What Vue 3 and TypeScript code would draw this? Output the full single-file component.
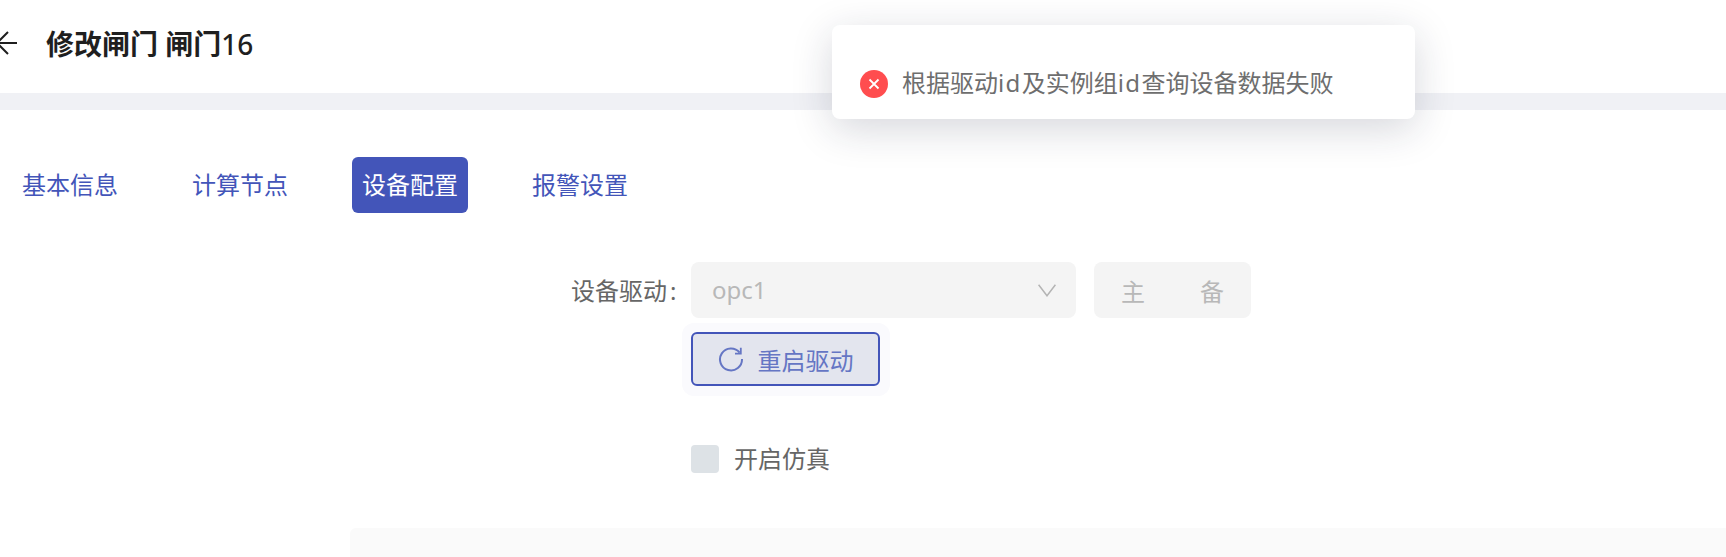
<script setup lang="ts">
const tabs: { label: string; active?: boolean }[] = [
  { label: '基本信息' },
  { label: '计算节点' },
  { label: '设备配置', active: true },
  { label: '报警设置' },
]
</script>

<template>
  <div class="page">
    <header class="header">
      <svg class="back" width="28" height="28" viewBox="0 0 28 28" fill="none" stroke="#1f1f1f" stroke-width="2">
        <path d="M28 14H8M19 3 8 14l11 11" />
      </svg>
      <h1 class="title">修改闸门 闸门<span class="num">16</span></h1>
    </header>
    <div class="band"></div>
    <main class="content">
      <nav class="tabs">
        <div v-for="t in tabs" :key="t.label" class="tab" :class="{ active: t.active }">{{ t.label }}</div>
      </nav>
      <section class="form">
        <div class="row">
          <label class="label">设备驱动<span class="colon">:</span></label>
          <div class="select">
            <span class="value">opc1</span>
            <svg width="18" height="13" viewBox="0 0 18 13" fill="none" stroke="#b4b4b4" stroke-width="1.5">
              <path d="M.6.8 9 11.8 17.4.8" />
            </svg>
          </div>
          <div class="radio"><span>主</span><span>备</span></div>
        </div>
        <div class="action">
          <button class="restart" type="button">
            <svg width="26" height="26" viewBox="0 0 26 26" fill="none" stroke="#6576c4" stroke-width="2">
              <path d="M21.6 6.6A11 11 0 1 0 24 13" />
              <path d="M22.8 1.8v5.8h-5.8" stroke-width="1.8" />
            </svg>
            <span class="restart-text">重启驱动</span>
          </button>
        </div>
        <div class="check">
          <span class="box"></span>
          <span class="check-text">开启仿真</span>
        </div>
      </section>
      <div class="panel"></div>
    </main>
    <div class="toast">
      <span class="toast-icon">
        <svg width="12" height="12" viewBox="0 0 12 12" stroke="#fff" stroke-width="1.8" fill="none">
          <path d="M1.5 1.5l9 9M10.5 1.5l-9 9" />
        </svg>
      </span>
      <span class="toast-text">根据驱动<span class="latin">id</span>及实例组<span class="latin">id</span>查询设备数据失败</span>
    </div>
  </div>
</template>

<style>
html, body { margin: 0; overflow: hidden; background: #fff; }
</style>

<style scoped>
.page {
  position: relative;
  width: 1726px;
  height: 557px;
  overflow: hidden;
  background: #fff;
  font-family: "Noto Sans", "Noto Sans CJK SC", sans-serif;
  font-size: 24px;
  color: #666;
}
.header {
  height: 93px;
  display: flex;
  align-items: center;
  gap: 29px;
  margin-left: -11px;
}
.back { flex: none; margin-top: -8px; }
.title {
  margin: -6px 0 0;
  font-size: 28px;
  font-weight: 700;
  color: #1f1f1f;
  line-height: 36px;
}
.num { font-weight: 500; }
.band { height: 17px; background: #f0f1f5; }
.content { padding: 47px 0 0; }
.tabs { display: flex; gap: 54px; padding-left: 12px; }
.tab {
  width: 116px;
  height: 56px;
  line-height: 56px;
  text-align: center;
  color: #4355b9;
  border-radius: 6px;
}
.tab.active { background: #4355b9; color: #fff; }
.form { padding: 49px 0 0 571px; }
.row { display: flex; align-items: center; height: 56px; }
.label { width: 120px; color: #666; white-space: nowrap; margin-top: -2px; }
.colon { margin-left: 3px; }
.select {
  width: 385px;
  height: 56px;
  box-sizing: border-box;
  padding: 0 20px 0 21px;
  display: flex;
  align-items: center;
  justify-content: space-between;
  background: #f4f4f4;
  border-radius: 8px;
  color: #b8b8b8;
}
.value { margin-top: -2px; }
.radio {
  margin-left: 18px;
  width: 157px;
  height: 56px;
  box-sizing: border-box;
  padding: 0 27px;
  display: flex;
  align-items: center;
  justify-content: space-between;
  background: #f4f4f4;
  border-radius: 8px;
  color: #b8b8b8;
}
.action {
  display: inline-flex;
  margin: 5px 0 0 111px;
  padding: 9px 10px 10px 9px;
  background: #fafafd;
  border-radius: 12px;
}
.restart {
  width: 189px;
  height: 54px;
  box-sizing: border-box;
  display: flex;
  align-items: center;
  justify-content: center;
  gap: 14px;
  padding: 0;
  background: #e3e5ee;
  border: 2px solid #4355b9;
  border-radius: 6px;
  font: inherit;
  color: #6576c4;
}
.check {
  display: flex;
  align-items: center;
  gap: 15px;
  margin: 43px 0 0 120px;
  height: 40px;
}
.check-text { margin-top: -3px; }
.box {
  width: 28px;
  height: 28px;
  background: #dde2e6;
  border-radius: 4px;
}
.panel {
  margin: 49px 0 0 350px;
  height: 60px;
  background: #fafafa;
  border-radius: 6px 0 0 0;
}
.toast {
  position: absolute;
  left: 832px;
  top: 25px;
  width: 583px;
  height: 94px;
  box-sizing: border-box;
  padding: 24px 0 0 28px;
  display: flex;
  align-items: center;
  gap: 15px;
  background: #fff;
  border-radius: 8px;
  box-shadow: 0 10px 40px rgba(30, 35, 60, 0.18);
}
.toast-icon {
  width: 28px;
  height: 28px;
  flex: none;
  display: flex;
  align-items: center;
  justify-content: center;
  background: #ff4d4f;
  border-radius: 50%;
}
.toast-text { white-space: nowrap; color: #6e6e6e; margin-top: -5px; margin-left: -1px; }
.latin { letter-spacing: 1.4px; }
</style>
